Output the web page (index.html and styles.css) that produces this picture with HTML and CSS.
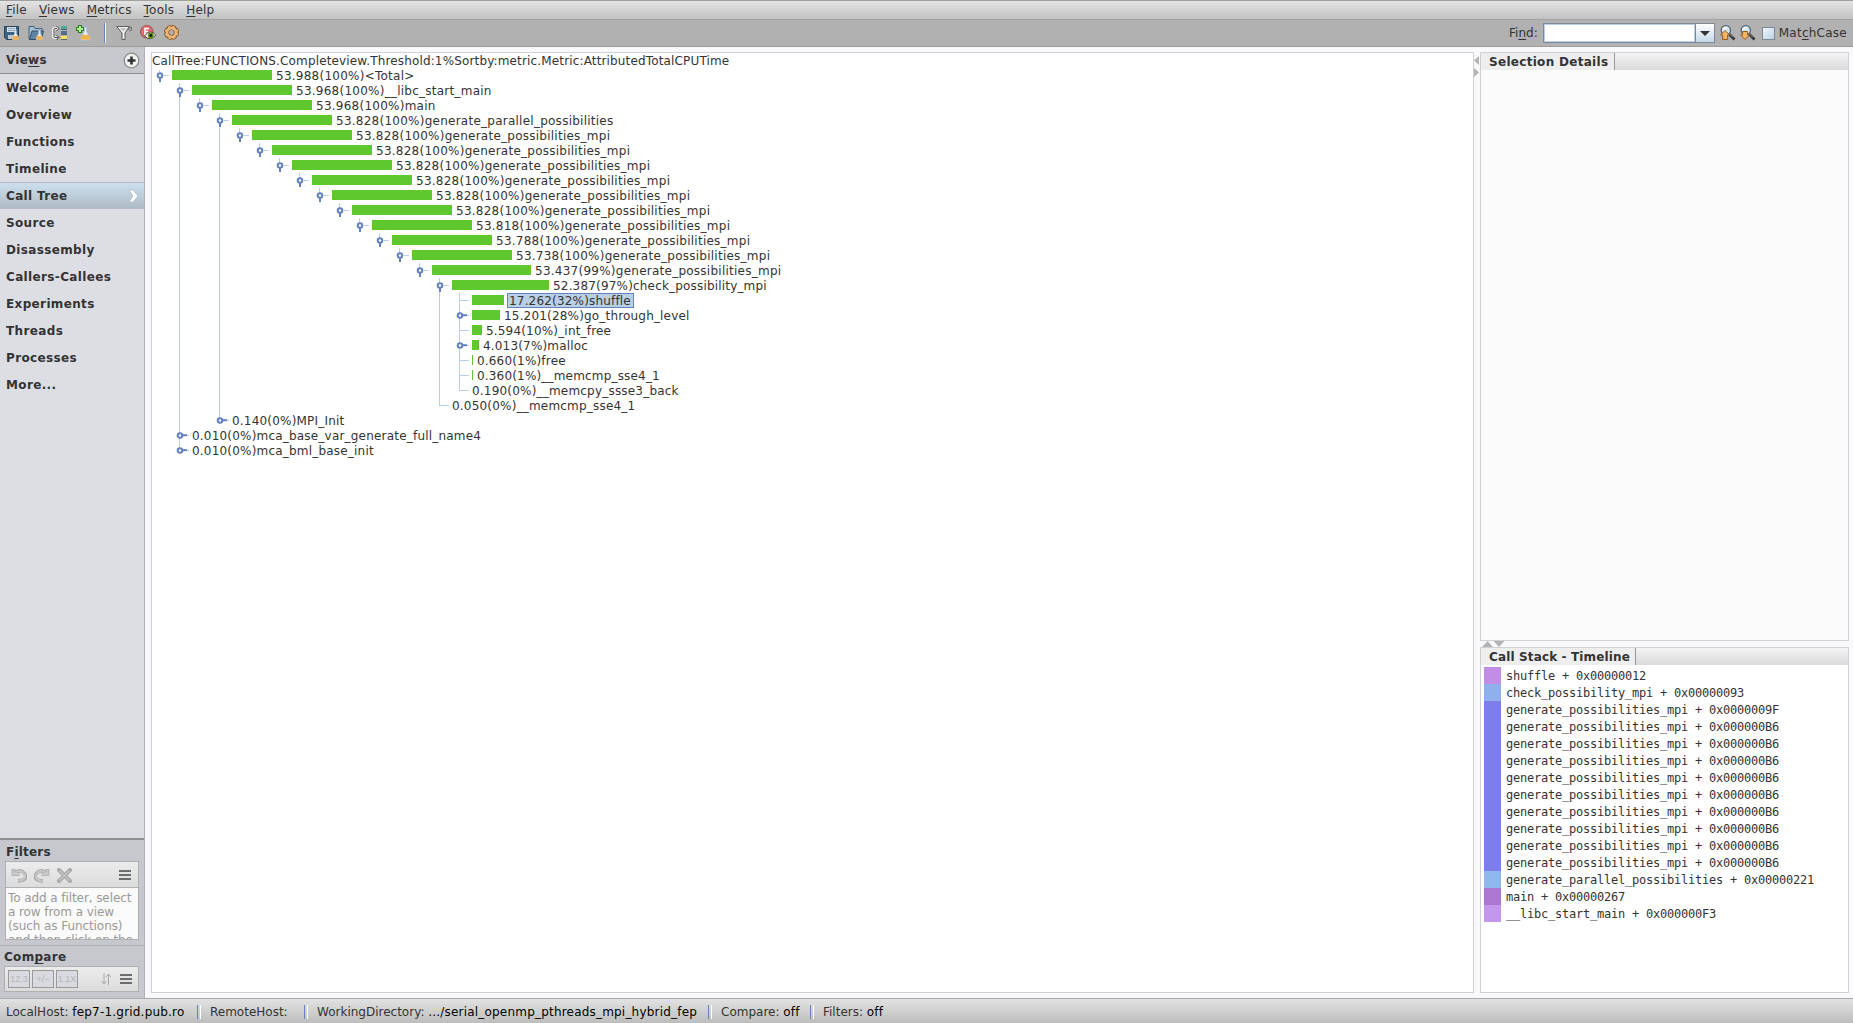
FILE: index.html
```html
<!DOCTYPE html>
<html lang="en">
<head>
<meta charset="utf-8">
<title>Performance Analyzer</title>
<link rel="stylesheet" href="styles.css">
</head>
<body>
<svg class="defs" width="0" height="0">
  <symbol id="open" viewBox="0 0 20 15"><path d="M7.500 2v2M12 7.500h5" stroke="#b8cfe5"/><path d="M8 10v4" stroke="#6382bf" stroke-width="2"/><circle cx="8" cy="7.500" r="2.300" fill="#fff" stroke="#6382bf" stroke-width="2"/></symbol>
  <symbol id="closed" viewBox="0 0 20 15"><path d="M15 7.500h2" stroke="#b8cfe5"/><path d="M10 7.200h5" stroke="#6382bf" stroke-width="2"/><circle cx="8" cy="7.500" r="2.300" fill="#fff" stroke="#6382bf" stroke-width="2"/></symbol>
  <symbol id="leaf" viewBox="0 0 20 15"><path d="M8 7.500h9" stroke="#b8cfe5"/></symbol>
  <symbol id="flask" viewBox="0 0 10 12"><path d="M3.500 .5h3M4 1v3.500L1.200 9q-.8 2 1 2.400h5.600q1.800-.4 1-2.400L6 4.500V1" fill="#e9eff5" stroke="#a9b8c6" stroke-width=".8"/><path d="M2.500 7h5l1.200 2.500q.4 1.400-1 1.500h-5.400q-1.400-.1-1-1.500z" fill="#f3b24e"/></symbol>
  <symbol id="lens" viewBox="0 0 16 16"><path d="M8.500 8.500l6 6" stroke="#333" stroke-width="2.600"/><path d="M9 8.500l4 4" stroke="#888" stroke-width="1"/><circle cx="5.800" cy="5.300" r="4.600" fill="#d5e8f8" stroke="#4f6272" stroke-width="1.300"/><path d="M3 4.500q1-2.500 4-2" stroke="#fff" stroke-width="1.500" fill="none"/></symbol>
</svg>
<div class="app">
  <nav class="menubar"><span><u>F</u>ile</span><span><u>V</u>iews</span><span><u>M</u>etrics</span><span><u>T</u>ools</span><span><u>H</u>elp</span></nav>
  <header class="toolbar">
    <div class="tools">
      <svg width="16" height="16"><path d="M.5 1.500h14v13h-12l-2-2z" fill="#3d6382" stroke="#27445c"/><path d="M3 2h9v5H3z" fill="#d3e0ea"/><path d="M4 3.500h7M4 5.500h7" stroke="#8fa8bb"/><path d="M4 10h6v4H4z" fill="#bccbd7"/><use href="#flask" x="7" y="4" width="9" height="12"/></svg>
      <svg width="16" height="16"><path d="M1 14V1.500h5l1 2h7V14z" fill="#a9c0d3" stroke="#40627f"/><path d="M1.500 14.500L4 6h11.500l-2 8.500z" fill="#5e84a4" stroke="#2e506b"/><use href="#flask" x="7" y="4" width="9" height="12"/></svg>
      <svg width="16" height="16"><path d="M6 3.500H3q-1.500 0-1.500 1.500v6q0 1.500 1.500 1.500h3" fill="none" stroke="#eee" stroke-width="3"/><path d="M5 3.500H3q-1 0-1 1v7q0 1 1 1h3M4.500 1l2.500 2.500L4.500 6M4.500 10L7 12.500 4.500 15" fill="none" stroke="#444"/><path d="M9 1h6v3H9z" fill="#4fa69a"/><path d="M9 6h6v3H9z" fill="#53718e"/><path d="M9 11h6v3H9z" fill="#f6e25b"/><path d="M9 4.500h6M9 9.500h6M9 14.500h6" stroke="#58656c"/></svg>
      <svg width="16" height="16"><use href="#flask" x="3" y="1" width="13" height="15"/><path d="M4 0v8M0 4h8" stroke="#24820e" stroke-width="4"/><path d="M4 1v6M1 4h6" stroke="#b8ed98" stroke-width="2"/></svg>
      <i class="rule"></i>
      <svg width="16" height="16"><path d="M.7 1.500h12.600L9 8v6.500H6V8z" fill="#f0f0f0" stroke="#5d5d5d"/><path d="M3.500 3h7L7.500 6.500z" fill="#c4c4c4"/><path d="M12 5q3-5 3.500-2t-2 3" fill="none" stroke="#666"/></svg>
      <svg width="16" height="16"><circle cx="6.800" cy="6.800" r="6.300" fill="#dc6c72" stroke="#a84c52"/><path d="M5 10V3.500h4M5 6.500h3" stroke="#fff" stroke-width="1.600" fill="none"/><path d="M4.500 11q6-7.500 11.200-1-5 7-11.200 1z" fill="#fff" stroke="#4c4c3c"/><circle cx="10.800" cy="10.500" r="3" fill="#65921d"/><circle cx="10.800" cy="10.500" r="1.400" fill="#111"/></svg>
      <svg width="16" height="16"><circle cx="7.500" cy="7.500" r="6.400" fill="none" stroke="#85501e" stroke-width="2.200" stroke-dasharray="3.400 1.627"/><circle cx="7.500" cy="7.500" r="4.700" fill="none" stroke="#8a5524" stroke-width="4.600"/><circle cx="7.500" cy="7.500" r="6.200" fill="none" stroke="#eab578" stroke-width="1.200" stroke-dasharray="2.400 2.470" stroke-dashoffset="-.5"/><circle cx="7.500" cy="7.500" r="4.500" fill="none" stroke="#eab578" stroke-width="2.800"/></svg>
    </div>
    <div class="find">
      <label>Fi<u>n</u>d:</label>
      <div class="combo"><input class="field" aria-label="Find"><span class="drop"><svg width="10" height="5"><path d="M0 0h10L5 5z" fill="#333"/></svg></span></div>
      <svg class="up" width="16" height="16"><use href="#lens" width="16" height="16"/><path d="M5 5.500L.6 10h2v4.500h5V10h2z" fill="#f4b566" stroke="#995a1c"/></svg>
      <svg class="down" width="16" height="16"><use href="#lens" width="16" height="16"/><path d="M5 14.500L.6 10h2V6.500h5V10h2z" fill="#f4b566" stroke="#995a1c"/></svg>
      <i class="check"></i><span class="match">Mat<u>c</u>hCase</span>
    </div>
  </header>
  <main class="work">
    <aside class="side">
      <div class="views-head"><b>Vie<u>w</u>s</b><svg width="17" height="17"><circle cx="8.500" cy="8.500" r="7.300" fill="#f2f2f2" stroke="#8b8b8b" stroke-width="1.300"/><path d="M8.500 4.500v8M4.500 8.500h8" stroke="#333" stroke-width="2.600"/></svg></div>
      <ul class="views">
        <li>Welcome</li><li>Overview</li><li>Functions</li><li>Timeline</li>
        <li class="on">Call Tree<svg width="12" height="14"><path d="M1 1h4l5 6-5 6H1l4-6z" fill="#fff" stroke="#9cb0c0" stroke-width=".6"/></svg></li>
        <li>Source</li><li>Disassembly</li><li>Callers-Callees</li><li>Experiments</li><li>Threads</li><li>Processes</li><li>More...</li>
      </ul>
      <section class="filters">
        <b>F<u>i</u>lters</b>
        <div class="fbox">
          <div class="fbar">
            <svg width="16" height="15"><path d="M2.500 1v5h6M3 6q6-6 10-1t-1 7q-2 1-5 1" fill="none" stroke="#aaa" stroke-width="3.600"/><path d="M2.500 1.500v4.500h6M3 5.500q6-5 9.500-.5t-1 7q-2 1-4 .8" fill="none" stroke="#c8c8c8" stroke-width="2"/></svg>
            <svg width="16" height="15"><g transform="matrix(-1 0 0 1 16 0)"><path d="M2.500 1v5h6M3 6q6-6 10-1t-1 7q-2 1-5 1" fill="none" stroke="#aaa" stroke-width="3.600"/><path d="M2.500 1.500v4.500h6M3 5.500q6-5 9.500-.5t-1 7q-2 1-4 .8" fill="none" stroke="#c8c8c8" stroke-width="2"/></g></svg>
            <svg width="15" height="15"><path d="M2 2l11 11M13 2L2 13" stroke="#a8a8a8" stroke-width="4" stroke-linecap="round"/><path d="M2.500 2.500l10 10M12.500 2.500l-10 10" stroke="#bebebe" stroke-width="2"/></svg>
            <svg class="burger" width="12" height="10"><path d="M0 1h12M0 5h12M0 9h12" stroke="#6d6d6d" stroke-width="2"/></svg>
          </div>
          <p>To add a filter, select<br>a row from a view<br>(such as Functions)<br>and then click on the</p>
        </div>
      </section>
      <section class="compare">
        <b>Com<u>p</u>are</b>
        <div class="cbar"><span>12.3</span><span>+/−</span><span>1.1X</span>
          <svg class="sort" width="10" height="12"><path d="M3 0v11M.5 8L3 11l2.500-3M7.500 12V1M5 4l2.500-3L10 4" fill="none" stroke="#aaa"/></svg>
          <svg width="12" height="10"><path d="M0 1h12M0 5h12M0 9h12" stroke="#6d6d6d" stroke-width="2"/></svg>
        </div>
      </section>
    </aside>
    <section class="treepane">
      <div class="title">CallTree:FUNCTIONS.Completeview.Threshold:1%Sortby:metric.Metric:AttributedTotalCPUTime</div>
      <ul class="tree">
       <li><div class="row"><svg><use href="#open"/></svg><i style="width:100px"></i><span>53.988(100%)&lt;Total&gt;</span></div>
       <ul>
        <li><div class="row"><svg><use href="#open"/></svg><i style="width:100px"></i><span>53.968(100%)__libc_start_main</span></div>
        <ul><li><div class="row"><svg><use href="#open"/></svg><i style="width:100px"></i><span>53.968(100%)main</span></div>
        <ul><li><div class="row"><svg><use href="#open"/></svg><i style="width:100px"></i><span>53.828(100%)generate_parallel_possibilities</span></div>
        <ul><li><div class="row"><svg><use href="#open"/></svg><i style="width:100px"></i><span>53.828(100%)generate_possibilities_mpi</span></div>
        <ul><li><div class="row"><svg><use href="#open"/></svg><i style="width:100px"></i><span>53.828(100%)generate_possibilities_mpi</span></div>
        <ul><li><div class="row"><svg><use href="#open"/></svg><i style="width:100px"></i><span>53.828(100%)generate_possibilities_mpi</span></div>
        <ul><li><div class="row"><svg><use href="#open"/></svg><i style="width:100px"></i><span>53.828(100%)generate_possibilities_mpi</span></div>
        <ul><li><div class="row"><svg><use href="#open"/></svg><i style="width:100px"></i><span>53.828(100%)generate_possibilities_mpi</span></div>
        <ul><li><div class="row"><svg><use href="#open"/></svg><i style="width:100px"></i><span>53.828(100%)generate_possibilities_mpi</span></div>
        <ul><li><div class="row"><svg><use href="#open"/></svg><i style="width:100px"></i><span>53.818(100%)generate_possibilities_mpi</span></div>
        <ul><li><div class="row"><svg><use href="#open"/></svg><i style="width:100px"></i><span>53.788(100%)generate_possibilities_mpi</span></div>
        <ul><li><div class="row"><svg><use href="#open"/></svg><i style="width:100px"></i><span>53.738(100%)generate_possibilities_mpi</span></div>
        <ul><li><div class="row"><svg><use href="#open"/></svg><i style="width:99px"></i><span>53.437(99%)generate_possibilities_mpi</span></div>
        <ul class="inner">
         <li><div class="row"><svg><use href="#open"/></svg><i style="width:97px"></i><span>52.387(97%)check_possibility_mpi</span></div>
         <ul>
          <li><div class="row"><svg><use href="#leaf"/></svg><i style="width:32px"></i><span class="sel">17.262(32%)shuffle</span></div></li>
          <li><div class="row"><svg><use href="#closed"/></svg><i style="width:28px"></i><span>15.201(28%)go_through_level</span></div></li>
          <li><div class="row"><svg><use href="#leaf"/></svg><i style="width:10px"></i><span>5.594(10%)_int_free</span></div></li>
          <li><div class="row"><svg><use href="#closed"/></svg><i style="width:7px"></i><span>4.013(7%)malloc</span></div></li>
          <li><div class="row"><svg><use href="#leaf"/></svg><i style="width:1px"></i><span>0.660(1%)free</span></div></li>
          <li><div class="row"><svg><use href="#leaf"/></svg><i style="width:1px"></i><span>0.360(1%)__memcmp_sse4_1</span></div></li>
          <li><div class="row"><svg><use href="#leaf"/></svg><span class="nobar">0.190(0%)__memcpy_ssse3_back</span></div></li>
         </ul></li>
         <li><div class="row"><svg><use href="#leaf"/></svg><span class="nobar">0.050(0%)__memcmp_sse4_1</span></div></li>
        </ul></li></ul></li></ul></li></ul></li></ul></li></ul></li></ul></li></ul></li></ul></li></ul></li></ul></li>
        <li><div class="row"><svg><use href="#closed"/></svg><span class="nobar">0.140(0%)MPI_Init</span></div></li>
        </ul></li></ul></li>
        <li><div class="row"><svg><use href="#closed"/></svg><span class="nobar">0.010(0%)mca_base_var_generate_full_name4</span></div></li>
        <li><div class="row"><svg><use href="#closed"/></svg><span class="nobar">0.010(0%)mca_bml_base_init</span></div></li>
       </ul></li>
      </ul>
    </section>
    <div class="vsplit"><svg width="5" height="24"><path d="M5 3v9L0 7.500zM0 15v9l5-4.500z" fill="#b3b3b8"/></svg></div>
    <div class="right">
      <section class="details"><div class="tabs"><b class="t1">Selection Details</b></div></section>
      <div class="hsplit"><svg width="24" height="6"><path d="M2 6h11L7.500 0zM13.500 0h11l-5.500 6z" fill="#b3b3b8"/></svg></div>
      <section class="stack"><div class="tabs"><b class="t2">Call Stack - Timeline</b></div>
        <ul class="frames">
          <li class="c1"><span>shuffle + 0x00000012</span></li>
          <li class="c2"><span>check_possibility_mpi + 0x00000093</span></li>
          <li class="c3"><span>generate_possibilities_mpi + 0x0000009F</span></li>
          <li class="c3"><span>generate_possibilities_mpi + 0x000000B6</span></li>
          <li class="c3"><span>generate_possibilities_mpi + 0x000000B6</span></li>
          <li class="c3"><span>generate_possibilities_mpi + 0x000000B6</span></li>
          <li class="c3"><span>generate_possibilities_mpi + 0x000000B6</span></li>
          <li class="c3"><span>generate_possibilities_mpi + 0x000000B6</span></li>
          <li class="c3"><span>generate_possibilities_mpi + 0x000000B6</span></li>
          <li class="c3"><span>generate_possibilities_mpi + 0x000000B6</span></li>
          <li class="c3"><span>generate_possibilities_mpi + 0x000000B6</span></li>
          <li class="c3"><span>generate_possibilities_mpi + 0x000000B6</span></li>
          <li class="c4"><span>generate_parallel_possibilities + 0x00000221</span></li>
          <li class="c5"><span>main + 0x00000267</span></li>
          <li class="c6"><span>__libc_start_main + 0x000000F3</span></li>
        </ul>
      </section>
    </div>
  </main>
  <footer class="status">
    <span class="s1">LocalHost: <em>fep7-1.grid.pub.ro</em></span>
    <span class="s2">RemoteHost:</span>
    <span class="s3">WorkingDirectory: <em>.../serial_openmp_pthreads_mpi_hybrid_fep</em></span>
    <span class="s4">Compare: <em>off</em></span>
    <span class="s5">Filters: <em>off</em></span>
  </footer>
</div>
</body>
</html>
```
FILE: styles.css
```css
* { box-sizing: border-box; }
body { margin: 0; font: 12px/15px "DejaVu Sans", sans-serif; color: #333; background: #f9f9fc; }
ul { list-style: none; margin: 0; padding: 0; }
svg { display: block; flex: none; }
i, em { font-style: normal; }
u { text-decoration: underline; text-underline-offset: 2px; text-decoration-thickness: 1px; text-decoration-skip-ink: none; }
.defs { position: absolute; }
.app { width: 1853px; height: 1023px; display: flex; flex-direction: column; overflow: hidden; white-space: nowrap; }

.menubar { height: 20px; border-top: 1px solid #a0a0a0; border-bottom: 1px solid #a3a3a3; background: linear-gradient(#e3e3e3, #c2c2c2); display: flex; gap: 12px; padding: 2px 6px 0; line-height: 15px; letter-spacing: .2px; }
.toolbar { height: 27px; background: #b1b1b1; border-bottom: 1px solid #9c9c9c; display: flex; justify-content: space-between; align-items: center; padding: 0 6px 0 4px; }
.tools, .find { display: flex; align-items: center; }
.tools { gap: 8px; }
.rule { width: 2px; height: 20px; border-left: 1px solid #6382bf; border-right: 1px solid #fff; margin: 0 2px 0 4px; }
.combo { display: flex; width: 172px; height: 20px; border: 1px solid #7a8a99; margin: 0 5px; }
.field { width: 151px; height: 18px; border: 1px solid #b8cfe5; background: #fff; padding: 0; font: inherit; }
.drop { width: 19px; border-left: 1px solid #7a8a99; background: linear-gradient(#fff, #c5d8ea); display: flex; align-items: center; justify-content: center; }
.up { margin-right: 4px; }
.check { width: 13px; height: 13px; border: 1px solid #7a8a99; background: linear-gradient(135deg, #eef5fc, #bfd3e6); margin: 0 4px 0 6px; }
.match { letter-spacing: .25px; }

.work { flex: 1; min-height: 0; display: flex; }
.side { width: 145px; border-right: 1px solid #b0b0b3; background: #dddee3; display: flex; flex-direction: column; }
.views-head { height: 27px; background: #c7c8ce; border-bottom: 1px solid #8f8f93; display: flex; justify-content: space-between; padding: 5px 4px 0 6px; letter-spacing: .25px; }
.views-head b { padding-top: 1px; }
.views { flex: 1; font-weight: bold; letter-spacing: .36px; }
.views li { height: 27px; line-height: 25px; padding: 2px 0 0 6px; }
.views .on { display: flex; justify-content: space-between; align-items: center; padding: 1px 4px 0 6px; border-top: 1px solid #b5bac6; border-bottom: 1px solid #b5bac6; background: linear-gradient(#cddfee, #aebcc6); }
.filters { height: 108px; background: #c7c8ce; border-top: 2px solid #8f8f90; border-bottom: 1px solid #adadb2; padding: 3px 5px 0; }
.filters b { display: block; height: 18px; padding-left: 1px; line-height: 18px; letter-spacing: .2px; }
.fbox { height: 79px; border: 1px solid #b0b0b3; background: #fafafa; overflow: hidden; }
.fbar { height: 26px; border-bottom: 1px solid #b0b0b3; background: linear-gradient(#ececec, #dcdcdc); display: flex; align-items: center; gap: 7px; padding: 1px 7px 0 5px; }
.burger { margin-left: auto; }
.fbox p { margin: 3px 0 0 2px; line-height: 14px; color: #999; letter-spacing: -.08px; }
.compare { height: 52px; background: #c7c8ce; padding: 2px 5px 0 4px; }
.compare b { display: block; height: 18px; line-height: 18px; letter-spacing: .3px; }
.cbar { height: 26px; border: 1px solid #b0b0b3; background: linear-gradient(#ececec, #dcdcdc); display: flex; align-items: center; gap: 2px; padding: 0 6px 0 3px; }
.cbar span { width: 22px; height: 18px; border: 1px solid #999; background: #d9dae0; color: #b4b4b7; font: 9px/17px "Liberation Sans", sans-serif; text-align: center; }
.sort { margin: 0 7px 0 auto; }

.treepane { margin: 5px 0 5px 6px; width: 1323px; border: 1px solid #ced0d3; background: #fff; }
.title { height: 15px; line-height: 17px; letter-spacing: .15px; }
.tree { letter-spacing: .25px; }
.tree .inner { letter-spacing: .18px; }
.tree ul { padding-left: 20px; }
.tree li { position: relative; }
.tree ul > li::before { content: ""; position: absolute; left: 7px; top: 0; bottom: 0; width: 1px; background: #b8cfe5; }
.tree ul > li:last-child::before { bottom: auto; height: 8px; }
.row { position: relative; display: flex; height: 15px; line-height: 17px; }
.row svg { width: 20px; height: 15px; }
.row i { height: 10px; margin-top: 2px; background: #5fc82f; }
.row span { margin-left: 4px; }
.row .nobar { margin-left: 0; letter-spacing: .2px; }
.row .sel { margin-left: 3px; padding: 0 2px 0 1px; height: 15px; line-height: 15px; border: 1px solid #6382bf; background: #b8cfe5; }

.vsplit { width: 6px; padding-top: 6px; }
.right { width: 369px; display: flex; flex-direction: column; padding: 5px 0; }
.details { height: 589px; border: 1px solid #ced0d3; background: #fbfbfb; }
.hsplit { height: 6px; }
.stack { flex: 1; border: 1px solid #ced0d3; background: #fff; }
.tabs { height: 17px; background: linear-gradient(#f4f4f4, #d9d9d9); display: flex; line-height: 18px; }
.tabs b { background: #eee; border-right: 1px solid #999; padding-left: 8px; }
.t1 { width: 134px; letter-spacing: .3px; }
.t2 { width: 155px; letter-spacing: .14px; }
.frames { padding: 2px 0 0 3px; font: 12px/19px "DejaVu Sans Mono", monospace; letter-spacing: -.224px; }
.frames li { height: 17px; border-left: 17px solid; padding-left: 5px; }
.frames span { display: block; color: #333; }
.frames .c1 { border-color: #c18de5; }
.frames .c2 { border-color: #8fafed; }
.frames .c3 { border-color: #7e7eea; }
.frames .c4 { border-color: #8fb9ed; }
.frames .c5 { border-color: #ab77d0; }
.frames .c6 { border-color: #c397ec; }

.status { height: 25px; border-top: 1px solid #a9a9a9; background: linear-gradient(#e2e2e2, #bdbdbd); display: flex; align-items: center; padding: 2px 0 0 6px; }
.status em { color: #000; letter-spacing: .2px; }
.status span { height: 15px; }
.status span + span::before { content: ""; display: inline-block; vertical-align: top; width: 2px; height: 14px; border-left: 1px solid #6382bf; border-right: 1px solid #fff; margin-right: 9px; }
.s1 { width: 191px; } .s2 { width: 107px; } .s3 { width: 404px; } .s4 { width: 102px; }
```
